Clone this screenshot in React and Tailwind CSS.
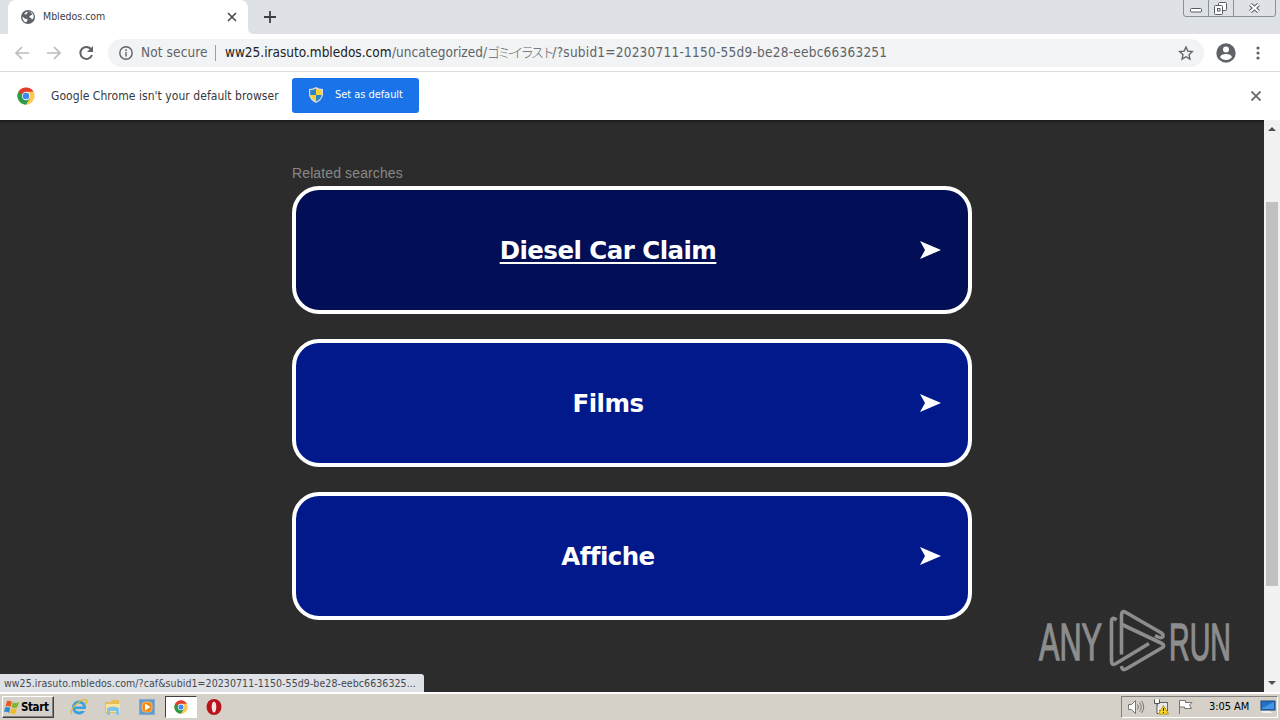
const searches = [
  { label: "Diesel Car Claim", active: true },
  { label: "Films", active: false },
  { label: "Affiche", active: false },
];

function ChromeLogo({ className }) {
  return (
    <svg viewBox="0 0 48 48" className={className}>
      <circle cx="24" cy="24" r="23" fill="#fbc950" />
      <path d="M4.1 12.5A23 23 0 0 0 24 47L34 29.7 24 24 24 12.5Z" fill="#2a9b4a" />
      <path d="M4.1 12.5A23 23 0 0 1 43.9 12.5H24A11.5 11.5 0 0 0 13 21Z" fill="#e33b2e" />
      <circle cx="24" cy="24" r="11" fill="#fff" />
      <circle cx="24" cy="24" r="8.8" fill="#4285f4" />
    </svg>
  );
}

function WindowButtons() {
  return (
    <svg width="97" height="18" viewBox="0 0 97 18" className="absolute right-0 top-0" fill="none">
      <path d="M.5 0V14Q.5 16.500 3 16.500H90Q92.500 16.500 92.500 14V0M25.500 0V16M50.500 0V16" stroke="#8b8f96" />
      <rect x="7.500" y="8.500" width="11" height="3.500" rx="1" fill="#fff" stroke="#555a64" />
      <rect x="35.500" y="2.500" width="8" height="8" rx="1" fill="#fff" stroke="#555a64" />
      <rect x="31.500" y="5.500" width="8" height="9" rx="1" fill="#fff" stroke="#555a64" />
      <rect x="34.500" y="8.500" width="2.500" height="2.500" stroke="#555a64" />
      <path d="m67.500 4.500 8 7m0-7-8 7" stroke="#555a64" strokeWidth="4" />
      <path d="m67.500 4.500 8 7m0-7-8 7" stroke="#fff" strokeWidth="2" />
    </svg>
  );
}

function TabStrip() {
  return (
    <div className="relative flex h-[34px] bg-[#dee1e6] pl-2">
      <div className="flex h-full w-[240px] items-center rounded-t-lg bg-white pl-[13px] pr-[11px]">
        <svg width="14" height="14" viewBox="0 0 14 14">
          <circle cx="7" cy="7" r="7" fill="#5f6368" />
          <path d="M1.500 6.500 4 8.800 6.500 9 6 11.500 4.500 12.200A6 6 0 0 1 1.500 6.500ZM7 1.500 9.500 2 11.500 4.500 9.500 5.500 8 7 10 8 11 9.500 12.500 8A6 6 0 0 0 9 1.500Z M3 4 5 4.500 7 2.500 5.500 1.800Z" fill="#fff" />
        </svg>
        <span className="ml-[8px] font-['DejaVu_Sans_Condensed','DejaVu_Sans',sans-serif] text-[10.500px] tracking-[-0.020px] text-[#3c4043]">
          Mbledos.com
        </span>
        <svg width="10" height="10" viewBox="0 0 10 10" className="ml-auto" stroke="#45494d" strokeWidth="1.600">
          <path d="m1 1 8 8M9 1 1 9" />
        </svg>
      </div>
      <svg width="6" height="6" viewBox="0 0 6 6" className="self-end" fill="#fff">
        <path d="M0 0Q0 6 6 6H0Z" />
      </svg>
      <svg width="12" height="12" viewBox="0 0 12 12" className="ml-[10px] mt-[11px]" stroke="#3c4043" strokeWidth="1.800">
        <path d="M6 0V12M0 6H12" />
      </svg>
      <WindowButtons />
    </div>
  );
}

function Toolbar() {
  return (
    <div className="flex h-[38px] items-center border-b border-[#d9dbdf] bg-white">
      <svg width="108" height="36" viewBox="0 0 108 36" fill="none" strokeWidth="1.700">
        <path d="M29 18H16M22 12 16 18 22 24" stroke="#babcbe" />
        <path d="M47 18H60M54 12 60 18 54 24" stroke="#babcbe" />
        <path d="M91.300 14.500A6 6 0 1 0 92 20" stroke="#5f6368" strokeWidth="2" />
        <path d="M93 11V17H87Z" fill="#5f6368" />
      </svg>
      <div className="flex h-7 w-[1096px] items-center rounded-full bg-[#f1f3f4] pl-[11px] pr-[10px] font-['DejaVu_Sans_Condensed','DejaVu_Sans',sans-serif] text-[13.500px] text-[#5f6368]">
        <svg width="14" height="14" viewBox="0 0 14 14" fill="none" stroke="#5f6368" strokeWidth="1.400">
          <circle cx="7" cy="7" r="6.200" />
          <path d="M7 6V10.500M7 3.300V4.900" />
        </svg>
        <span className="ml-[8px] w-[67px] whitespace-nowrap tracking-[0.120px]">Not secure</span>
        <span className="ml-[7px] h-4 w-px bg-[#9a9da1]" />
        <span className="ml-[9px] w-[167px] whitespace-nowrap text-[#202124]">ww25.irasuto.mbledos.com</span>
        <span className="whitespace-nowrap">
          /uncategorized/
          <span className="font-['Noto_Sans_CJK_JP',sans-serif] text-[13px] font-light tracking-[-2.400px]">ゴミ-イラスト</span>
          <span className="tracking-[0.240px]">/?subid1=20230711-1150-55d9-be28-eebc66363251</span>
        </span>
        <svg width="16" height="16" viewBox="0 0 24 24" className="ml-auto" fill="none" stroke="#5f6368" strokeWidth="2">
          <path d="m12 3 2.800 6.200 6.700.7-5 4.600 1.400 6.700-5.900-3.500-5.900 3.500 1.400-6.700-5-4.600 6.700-.7Z" />
        </svg>
      </div>
      <svg width="20" height="20" viewBox="0 0 20 20" className="ml-3">
        <circle cx="10" cy="10" r="9.700" fill="#5f6368" />
        <circle cx="10" cy="6.500" r="3" fill="#fff" />
        <path d="M4 14Q5 11 10 11T16 14Q14 17 10 17T4 14Z" fill="#fff" />
      </svg>
      <svg width="4" height="14" viewBox="0 0 4 14" className="ml-[20px]" fill="#5f6368">
        <circle cx="2" cy="2" r="1.600" />
        <circle cx="2" cy="7" r="1.600" />
        <circle cx="2" cy="12" r="1.600" />
      </svg>
    </div>
  );
}

function InfoBar() {
  return (
    <div className="flex h-12 items-center bg-white pl-[17px] pr-[19px] font-['DejaVu_Sans_Condensed','DejaVu_Sans',sans-serif]">
      <ChromeLogo className="size-[18px]" />
      <span className="ml-4 w-[241px] whitespace-nowrap text-[12px] tracking-[0.050px] text-[#35383c]">
        Google Chrome isn't your default browser
      </span>
      <button className="mb-[2px] flex h-[35px] w-[127px] items-center rounded-[3px] bg-[#1a73e8] pl-[17px] text-white">
        <svg width="14" height="16" viewBox="0 0 14 16">
          <path d="M7 0Q10 2 14 2V8Q13 13 7 16 1 13 0 8V2Q4 2 7 0Z" fill="#d4dce5" />
          <path d="M7 1.500V8H1.200V3Q4.500 3 7 1.500Z" fill="#2d83c9" />
          <path d="M7 1.500V8H12.800V3Q9.500 3 7 1.500Z" fill="#f9d132" />
          <path d="M7 8V14.600Q2 12 1.200 8Z" fill="#f9d132" />
          <path d="M7 8V14.600Q12 12 12.800 8Z" fill="#2d83c9" />
        </svg>
        <span className="ml-[12px] whitespace-nowrap text-[11px] tracking-[-0.050px]">Set as default</span>
      </button>
      <svg width="10" height="10" viewBox="0 0 10 10" className="ml-auto" stroke="#5f6368" strokeWidth="1.700">
        <path d="m.5.5 9 9m0-9-9 9" />
      </svg>
    </div>
  );
}

function SearchCard({ label, active }) {
  return (
    <a
      className={`flex h-32 w-[680px] items-center rounded-[27px] border-4 border-white text-white ${
        active ? "bg-[#020f57]" : "bg-[#02198b]"
      }`}
    >
      <span
        className={`flex-1 pt-px text-center font-['DejaVu_Sans',sans-serif] text-[24.500px] font-bold leading-8 tracking-[-0.550px] ${
          active ? "underline decoration-2 underline-offset-[3px]" : ""
        }`}
      >
        {label}
      </span>
      <svg width="21" height="18" viewBox="0 0 21 18" className="mr-[27px]" fill="#fff">
        <path d="M0 0 21 9 0 18 5 9Z" />
      </svg>
    </a>
  );
}

function Watermark() {
  return (
    <svg width="200" height="68" viewBox="0 0 200 68" className="absolute bottom-[18px] right-[44px]" fill="none">
      <g fill="#8d8d8d" stroke="#8d8d8d" strokeWidth="1.400" fontFamily="Liberation Sans, sans-serif" fontSize="52">
        <text x="3" y="53.500" textLength="63" lengthAdjust="spacingAndGlyphs">ANY</text>
        <text x="133" y="53.500" textLength="62" lengthAdjust="spacingAndGlyphs">RUN</text>
      </g>
      <g stroke="#8d8d8d" strokeWidth="3.600" strokeLinejoin="round">
        <path d="M85.500 48.500V9Q85.500 4 90 6.500L125.500 27Q128.500 29.500 126 31.500 124 32.500 119 29.500" />
        <path d="M80.500 14Q75.500 10 75.500 16V55Q75.500 60 80 57.500L113 37.500" />
        <path d="M86 18.500 126 37.500Q129 39.500 126.500 41.500L90 63Q86 65 85.500 60" />
      </g>
    </svg>
  );
}

function Scrollbar() {
  return (
    <div className="flex w-4 flex-col items-center bg-[#f1f1f1]">
      <svg width="8" height="4" viewBox="0 0 8 4" className="mt-[7px]" fill="#505050">
        <path d="M4 0 8 4H0Z" />
      </svg>
      <div className="mt-[71px] h-[384px] w-3 bg-[#c1c1c1]" />
      <svg width="8" height="4" viewBox="0 0 8 4" className="mb-[7px] mt-auto" fill="#505050">
        <path d="M0 0H8L4 4Z" />
      </svg>
    </div>
  );
}

function Page() {
  return (
    <div className="relative flex h-[572px]">
      <main className="relative flex-1 bg-[#2c2c2c] pl-[292px] pt-[43px] shadow-[inset_0_4px_3px_-3px_#151515]">
        <div className="h-[23px] font-['Liberation_Sans',sans-serif] text-[14px] leading-5 tracking-[0.120px] text-[#888]">
          Related searches
        </div>
        <div className="flex flex-col gap-[25px]">
          {searches.map((s) => (
            <SearchCard key={s.label} label={s.label} active={s.active} />
          ))}
        </div>
        <div className="absolute bottom-0 left-0 h-[18px] w-[424px] overflow-hidden whitespace-nowrap rounded-tr-[3px] bg-[#dee1e6] pl-1 font-['DejaVu_Sans_Condensed','DejaVu_Sans',sans-serif] text-[10.500px] leading-[18px] tracking-[0.075px] text-[#45494d]">
          ww25.irasuto.mbledos.com/?caf&subid1=20230711-1150-55d9-be28-eebc6636325...
        </div>
      </main>
      <Scrollbar />
      <Watermark />
    </div>
  );
}

function Taskbar() {
  return (
    <footer className="flex h-7 items-center border-t-2 border-white bg-[#d5d0c8] font-['DejaVu_Sans_Condensed','DejaVu_Sans',sans-serif]">
      <button className="ml-[2px] flex h-[22px] w-[52px] items-center border border-b-[#404040] border-l-white border-r-[#404040] border-t-white pl-px text-[11.500px] font-bold tracking-[-0.400px] text-black shadow-[inset_-1px_-1px_#808080]">
        <svg width="16" height="16" viewBox="0 0 16 16" className="mr-px shrink-0">
          <path d="M3 2Q6 1 8 3L6.500 8Q4.500 6.500 1.500 7.500Z" fill="#e85c24" />
          <path d="M9 3.300Q12 5 15 3L13.500 8Q10.500 10 7.500 8.300Z" fill="#7db928" />
          <path d="M1.200 8.500Q4 7.500 6.200 9L5 14Q3 12 0 13Z" fill="#2f8bd0" />
          <path d="M7.200 9.400Q10 11 13 9L11.500 14Q9 16 6 14.300Z" fill="#f4ba24" />
        </svg>
        <span className="pt-[2px]">Start</span>
      </button>
      <svg width="18" height="18" viewBox="0 0 18 18" className="ml-4" fill="none">
        <circle cx="9" cy="9.500" r="5.500" stroke="#36a3df" strokeWidth="3" />
        <path d="M5 9.800H14" stroke="#36a3df" strokeWidth="2.500" />
        <path d="M11 12H16" stroke="#d5d0c8" strokeWidth="2" />
        <path d="M2 16Q-1 13 6 6.500T16 2Q18 3 15 7" stroke="#e5b72e" strokeWidth="1.300" />
      </svg>
      <svg width="18" height="17" viewBox="0 0 18 17" className="ml-4">
        <path d="M1 3H7L8 1H15V14H1Z" fill="#e9bd51" />
        <path d="M2 5H16V13H2Z" fill="#f8e49b" />
        <path d="M3 9Q9 6 15 9V16H12V12H6V16H3Z" fill="#7fc4e8" />
      </svg>
      <svg width="16" height="16" viewBox="0 0 16 16" className="ml-[17px]">
        <rect x=".5" y=".5" width="15" height="15" fill="#5b9dd8" stroke="#86a9c7" />
        <rect x="3" y="3" width="10" height="10" rx="3" fill="#f18b17" stroke="#ffb55b" />
        <path d="M6 4.500 11.500 8 6 11.500Z" fill="#fff" />
      </svg>
      <div className="ml-[10px] flex h-[22px] w-[32px] items-center justify-center border border-b-white border-l-[#404040] border-r-white border-t-[#404040] bg-white">
        <ChromeLogo className="size-[14px]" />
      </div>
      <svg width="16" height="16" viewBox="0 0 16 16" className="ml-[9px]">
        <ellipse cx="8" cy="8" rx="7.500" ry="8" fill="#b8121b" />
        <ellipse cx="8" cy="8" rx="2.300" ry="5.500" fill="#f4e4e2" />
      </svg>
      <div className="ml-auto mr-[2px] flex h-[22px] w-[157px] items-center border border-b-white border-l-[#808080] border-r-white border-t-[#808080] pl-[6px] pr-px">
        <svg width="17" height="16" viewBox="0 0 17 16" fill="none" stroke="#777">
          <path d="M.5 5.500H3.500L7.500 1.500V14.500L3.500 10.500H.5Z" fill="#fff" />
          <path d="M9.500 5.500Q11.500 8 9.500 10.500M11.500 3.500Q15 8 11.500 12.500M13.500 2Q18 8 13.500 14" />
        </svg>
        <svg width="16" height="16" viewBox="0 0 16 16" className="ml-2" fill="none">
          <rect x="4.500" y="3.500" width="10" height="8" fill="#e8e8e8" stroke="#666" />
          <path d="M1.500.5V4.500H6.500V.5M4 4.500V14.500H7" stroke="#555" fill="#fff" />
          <path d="M10.500 6.500 15.500 15H5.500Z" fill="#f9d923" stroke="#b99714" />
          <path d="M10.500 9V12M10.500 13V14" stroke="#222" />
        </svg>
        <svg width="16" height="16" viewBox="0 0 16 16" className="ml-2" fill="#fff" stroke="#777">
          <path d="M2.500 15V1.500H8.500V3.500H15L12.500 6 14.500 9.500H7.500V8H2.500" />
        </svg>
        <span className="ml-[16px] w-[43px] whitespace-nowrap pt-px text-[11px] tracking-[-0.050px] text-black">3:05 AM</span>
        <svg width="16" height="14" viewBox="0 0 16 14" className="ml-auto">
          <rect x="1" y="1" width="14" height="9" fill="#246fc7" stroke="#174779" />
          <path d="M2 8 14 2V9H2Z" fill="#4696e4" />
          <path d="M1 11H10L12 13H3Z" fill="#eef2f5" />
        </svg>
      </div>
    </footer>
  );
}

export default function App() {
  return (
    <div className="h-[720px] w-[1280px] overflow-hidden">
      <TabStrip />
      <Toolbar />
      <InfoBar />
      <Page />
      <Taskbar />
    </div>
  );
}
